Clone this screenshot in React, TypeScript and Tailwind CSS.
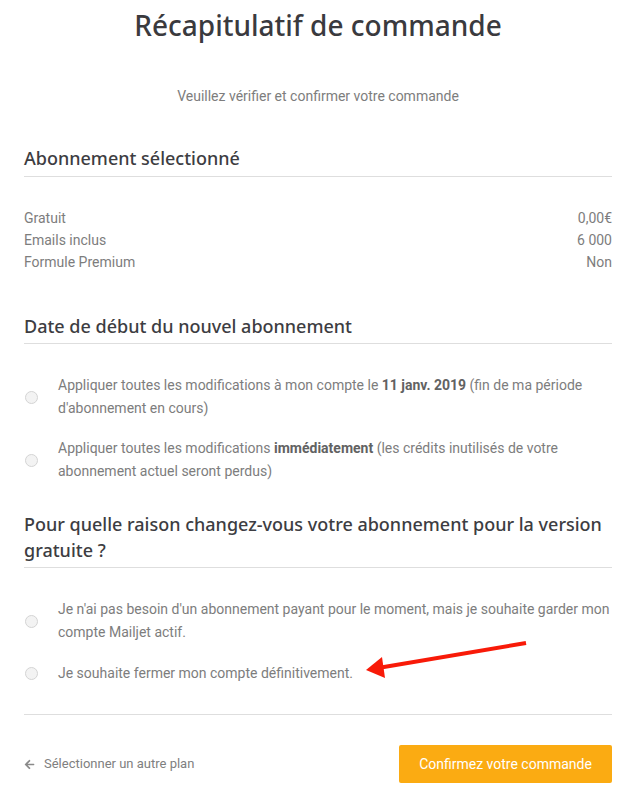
import React from "react";
import { FaArrowLeft } from "react-icons/fa";

const heading = "font-['Noto_Sans',sans-serif] font-medium text-[18px] leading-[26px] text-[#3d3d42]";

function Radio({ children }: { children: React.ReactNode }) {
  return (
    <label className="flex items-center">
      <span className="ml-[1px] h-[13px] w-[13px] shrink-0 rounded-full border border-[#d4d4d4] bg-[#f3f3f3]" />
      <span className="ml-[20px] text-[14px] leading-[23px] text-[#7d7d7d]">{children}</span>
    </label>
  );
}

export default function App() {
  return (
    <div className="relative w-[634px] bg-white pl-6 pr-[22px] font-['Roboto',sans-serif]">
      <h1 className="pt-[7px] text-center font-['Noto_Sans',sans-serif] text-[28px] font-medium leading-[36px] text-[#3a3a3e]">
        Récapitulatif de commande
      </h1>
      <p className="mt-[43px] text-center text-[14px] leading-[20px] text-[#7d7d7d]">
        Veuillez vérifier et confirmer votre commande
      </p>

      <h2 className={`mt-[39px] border-b border-[#dedede] pb-[5px] ${heading}`}>Abonnement sélectionné</h2>
      <div className="mt-[30px] text-[14px] leading-[22px] text-[#7d7d7d]">
        <div className="flex justify-between">
          <span>Gratuit</span>
          <span>0,00€</span>
        </div>
        <div className="flex justify-between">
          <span>Emails inclus</span>
          <span>6 000</span>
        </div>
        <div className="flex justify-between">
          <span>Formule Premium</span>
          <span>Non</span>
        </div>
      </div>

      <h2 className={`mt-[40px] border-b border-[#dedede] pb-[4px] ${heading}`}>Date de début du nouvel abonnement</h2>
      <div className="mt-[30px] flex flex-col gap-[17px]">
        <Radio>
          Appliquer toutes les modifications à mon compte le <b className="text-[#626262]">11 janv. 2019</b> (fin de ma période
          d'abonnement en cours)
        </Radio>
        <Radio>
          Appliquer toutes les modifications <b className="text-[#626262]">immédiatement</b> (les crédits inutilisés de votre
          abonnement actuel seront perdus)
        </Radio>
      </div>

      <h2 className={`mt-[28px] border-b border-[#dedede] pb-[4px] ${heading}`}>
        Pour quelle raison changez-vous votre abonnement pour la version gratuite ?
      </h2>
      <div className="mt-[30px] flex flex-col gap-[18px]">
        <Radio>
          Je n'ai pas besoin d'un abonnement payant pour le moment, mais je souhaite garder mon compte Mailjet actif.
        </Radio>
        <Radio>Je souhaite fermer mon compte définitivement.</Radio>
      </div>

      <div className="mt-[29px] border-t border-[#dedede]" />

      <div className="mt-[30px] flex items-center justify-between pb-[17px]">
        <a className="flex items-center text-[13px] text-[#808080]">
          <FaArrowLeft className="text-[11px] text-[#8a8a8a]" />
          <span className="ml-[9px]">Sélectionner un autre plan</span>
        </a>
        <button className="h-[38px] w-[213px] rounded-[2px] bg-[#fbab12] text-[14px] text-white">
          Confirmez votre commande
        </button>
      </div>

      <svg className="pointer-events-none absolute left-0 top-0" width="634" height="800">
        <line x1="526" y1="643" x2="378" y2="668" stroke="#f81a08" strokeWidth="4" />
        <polygon points="366,670 382,657 385,678" fill="#f81a08" />
      </svg>
    </div>
  );
}
